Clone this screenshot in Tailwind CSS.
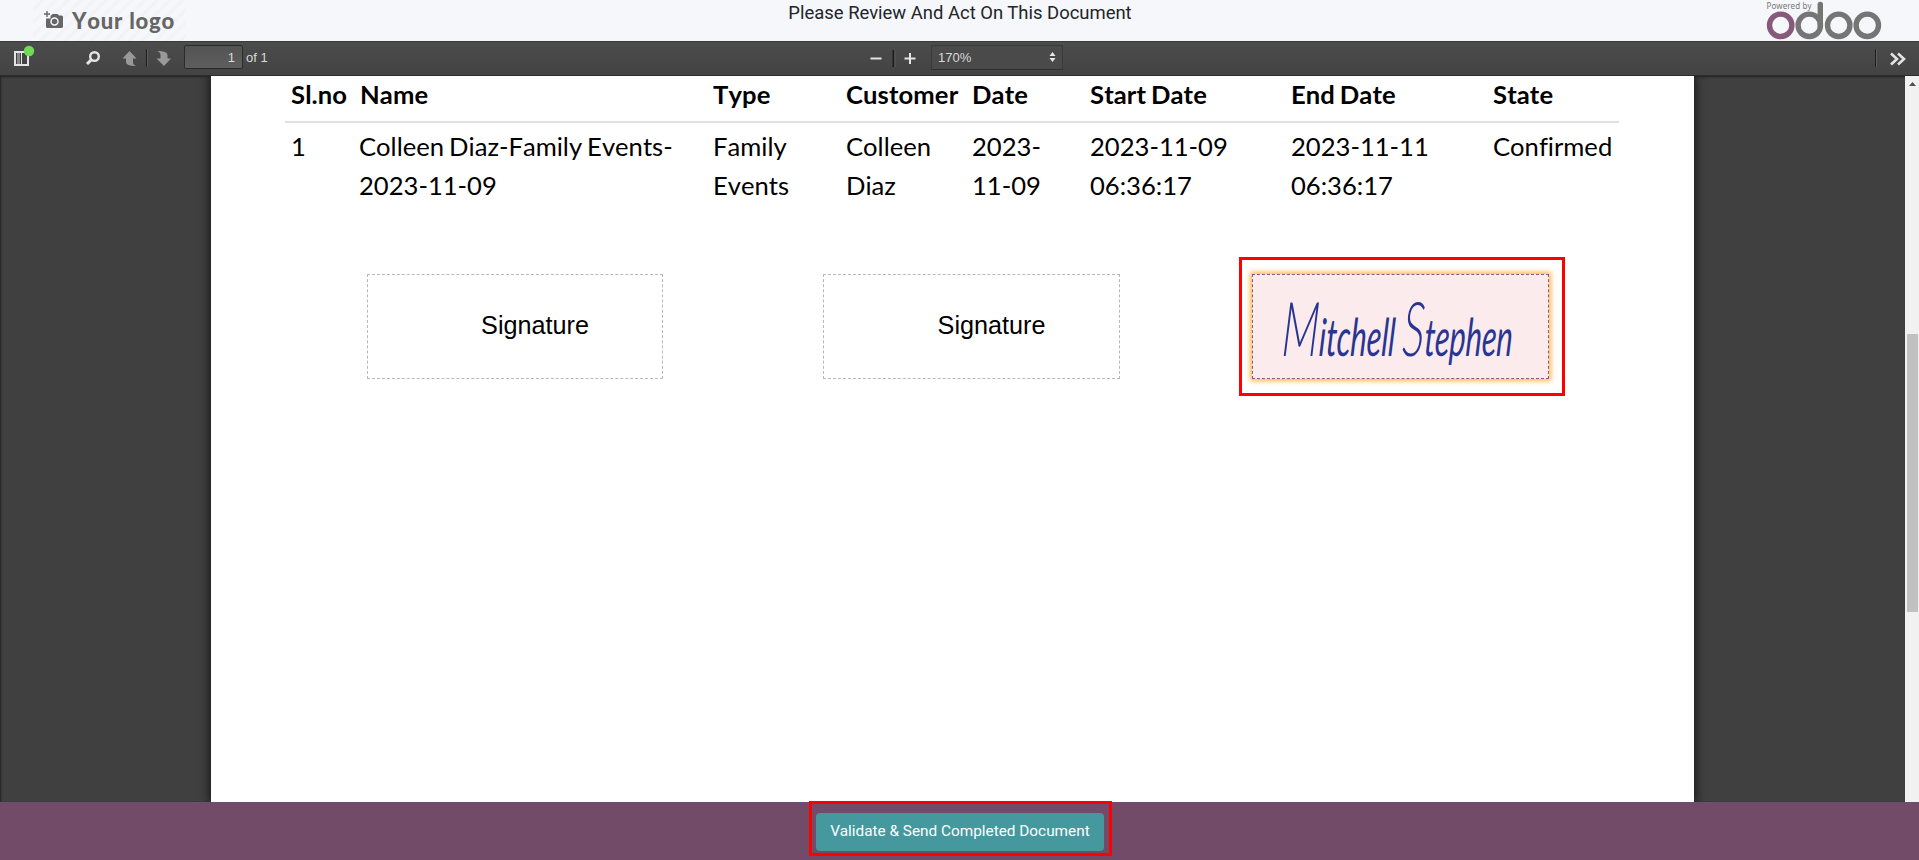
<!DOCTYPE html>
<html lang="en">
<head>
<meta charset="utf-8">
<title>Sign document</title>
<script src="https://cdn.jsdelivr.net/npm/@tailwindcss/browser@4"></script>
</head>
<body class="h-[860px] w-[1919px] overflow-hidden flex flex-col bg-[#404040] font-['Roboto',sans-serif]">

<header class="h-[41px] shrink-0 bg-[#f6f7fb] grid grid-cols-[1fr_auto_1fr] items-start">
  <div class="ml-[33px] w-[153px] h-[41px] flex items-center pl-[11px] bg-[repeating-linear-gradient(135deg,#f6f7fb_0px,#f6f7fb_5px,#f2f3f7_6px,#f2f3f7_8px,#f6f7fb_9px)]">
    <svg class="w-[20px] h-[20px] shrink-0" viewBox="0 0 20 20" fill="none">
      <path d="M3 0v6M0 3h6" stroke="#666" stroke-width="1.4"/>
      <path fill="#666" d="M7 4.500 8.500 3h5L15 4.500h2.500a1.500 1.500 0 0 1 1.500 1.500v9.500a1.500 1.500 0 0 1-1.500 1.500h-14A1.500 1.500 0 0 1 2 15.500V7.500h4.500V4.500z"/>
      <circle cx="10.500" cy="10.500" r="3.500" stroke="#f6f7fb" stroke-width="1.500"/>
    </svg>
    <span class="ml-[8px] whitespace-nowrap font-['Lato',sans-serif] font-black text-[22.500px] leading-[38px] tracking-[0.800px] [font-kerning:none] text-[#666] -mr-4 origin-left scale-x-[0.98]">Your logo</span>
  </div>
  <h1 class="text-[18.450px] leading-[26px] text-[#212529] whitespace-nowrap pl-px">Please Review And Act On This Document</h1>
  <svg class="justify-self-end mr-[36px] w-[120px] h-[41px]" viewBox="1763 0 120 41" fill="none" stroke="#757575" stroke-width="5.400">
    <text x="1766.500" y="8.500" font-family="Noto Sans" font-size="8" textLength="45" fill="#777" stroke="none">Powered by</text>
    <circle cx="1780.700" cy="25.300" r="11.200" stroke="#875a7b"/>
    <circle cx="1809.300" cy="25.300" r="11.200"/>
    <path d="M1820.300 25.300V4.500" stroke-linecap="round"/>
    <circle cx="1838.700" cy="25.300" r="11.200"/>
    <circle cx="1867.300" cy="25.300" r="11.200"/>
  </svg>
</header>

<nav class="h-[35px] shrink-0 border-b border-[#2c2c2c] bg-linear-to-b from-[#4c4c4c] to-[#434343] shadow-[inset_0_1px_0_#3a3a3a] flex items-center font-['Liberation_Sans',sans-serif] text-[#d9d9d9]">
  <div class="flex items-center h-full w-[869px]">
    <svg class="w-[184px] h-[34px] shrink-0" viewBox="0 41 184 34" fill="none">
      <path fill="#e4e4e4" d="M14 51h15v15H14z"/>
      <path fill="#888" d="M16 53h4v11h-4z"/>
      <path fill="#444" d="M16 53h1v11h-1zM20 53h1v11h-1zM22 53h5v11h-5z"/>
      <circle cx="29" cy="51" r="5.200" fill="#70db55"/>
      <circle cx="94.500" cy="56.500" r="4.300" stroke="#e4e4e4" stroke-width="2.400"/>
      <path d="m91.500 59.700-4.500 4.300" stroke="#e4e4e4" stroke-width="3"/>
      <path fill="#999" d="M129.500 51l7 7.500h-3.500v4q0 2 3 3.500-10 0-10-4v-3.500h-3.500z"/>
      <path d="M146.500 49v18" stroke="#1f1f1f"/>
      <path d="M147.500 49v18" stroke="#5c5c5c"/>
      <path fill="#999" d="M164 66l-7.500-7.500h4v-4q0-2-3-3.500 10 0 10 4v3.500h3.500z"/>
    </svg>
    <div class="w-[59px] h-[24px] mb-[2px] rounded-[2px] border border-[#2b2b2b] bg-linear-to-b from-[#535353] to-[#5e5e5e] text-right pr-[7px] text-[13px] leading-[24px]">1</div>
    <span class="ml-[3px] text-[13px] leading-[24px]">of 1</span>
  </div>
  <div class="flex items-center h-full">
    <svg class="w-[62px] h-[34px] shrink-0" viewBox="869 41 62 34" fill="none">
      <path d="M870.500 58.500h11M904.500 58.500h11M910 53v11" stroke="#e4e4e4" stroke-width="2"/>
      <path d="M893.500 50v17" stroke="#1f1f1f" stroke-width="2"/>
      <path d="M895 50v17" stroke="#5c5c5c"/>
    </svg>
    <div class="w-[132px] h-[25px] mb-[2px] border border-[#3a3a3a] border-b-[#303030] flex items-center justify-between pl-[6px] pr-[6px] bg-[#4a4a4a]">
      <span class="text-[13px] leading-[24px] pt-px">170%</span>
      <svg class="w-[7px] h-[10px]" viewBox="0 0 7 10" fill="#e8e8e8"><path d="M.5 4h6l-3-4zM.5 6h6l-3 4z"/></svg>
    </div>
  </div>
  <svg class="ml-auto w-[50px] h-[34px]" viewBox="1869 41 50 34" fill="none">
    <path d="M1875.500 49v18" stroke="#1f1f1f"/>
    <path d="M1876.500 49v18" stroke="#5c5c5c"/>
    <path d="m1891 53.500 6 5.500-6 5.500m7-11 6 5.500-6 5.500" stroke="#e4e4e4" stroke-width="2.600"/>
  </svg>
</nav>

<main class="h-[726px] shrink-0 flex overflow-hidden">
  <div class="flex-1 overflow-hidden pl-[211px] bg-[#404040] shadow-[inset_1px_1px_2px_#222]">
    <section class="w-[1483px] h-full bg-white shadow-[0_0_9px_2px_#191919] pl-[74px] text-black">
      <table class="w-[1334px] table-fixed border-collapse text-left align-top font-['Lato',sans-serif] text-[25.600px] leading-[39px] [font-kerning:none] [font-variant-ligatures:none] [word-spacing:-1.500px]">
        <colgroup><col class="w-[69px]"><col class="w-[354px]"><col class="w-[132px]"><col class="w-[127px]"><col class="w-[118px]"><col class="w-[201px]"><col class="w-[202px]"><col class="w-[131px]"></colgroup>
        <thead>
          <tr class="border-b-2 border-[#dee2e6] whitespace-nowrap leading-[36px] tracking-[0.100px]">
            <th class="pl-[6px] pb-[9px]">Sl.no</th><th class="pl-[6px] pb-[9px]">Name</th><th class="pl-[5px] pb-[9px]">Type</th><th class="pl-[6px] pb-[9px]">Customer</th><th class="pl-[5px] pb-[9px]">Date</th><th class="pl-[5px] pb-[9px]">Start Date</th><th class="pl-[5px] pb-[9px]">End Date</th><th class="pl-[5px] pb-[9px]">State</th>
          </tr>
        </thead>
        <tbody>
          <tr class="align-top whitespace-nowrap">
            <td class="pl-[6px] pt-[4px]">1</td>
            <td class="pl-[5px] pt-[4px]">Colleen Diaz-Family Events-<br>2023-11-09</td>
            <td class="pl-[5px] pt-[4px]">Family<br>Events</td>
            <td class="pl-[6px] pt-[4px]">Colleen<br>Diaz</td>
            <td class="pl-[5px] pt-[4px]">2023-<br>11-09</td>
            <td class="pl-[5px] pt-[4px]">2023-11-09<br>06:36:17</td>
            <td class="pl-[5px] pt-[4px]">2023-11-11<br>06:36:17</td>
            <td class="pl-[5px] pt-[4px]">Confirmed</td>
          </tr>
        </tbody>
      </table>
      <div class="mt-[52px] pl-[82px] flex items-start font-['Liberation_Sans',sans-serif] text-[25.200px]">
        <div class="mt-[17px] w-[296px] h-[105px] border border-dashed border-[#b8b8b8] flex items-center justify-center pl-[40px] pb-[2px]">Signature</div>
        <div class="mt-[17px] ml-[160px] w-[297px] h-[105px] border border-dashed border-[#b8b8b8] flex items-center justify-center pl-[40px] pb-[2px]">Signature</div>
        <div class="ml-[119px] w-[326px] h-[139px] border-3 border-[#ff0000] pt-[14px] pl-[10px]">
          <div class="w-[297px] h-[105px] border border-dashed border-[#875a7b] bg-[#fcebed] shadow-[0_0_5px_2px_#ffb84d] flex items-center pl-[28px]">
            <svg class="w-[240px] h-[90px] overflow-visible" viewBox="0 0 240 90">
              <text transform="translate(0 74) skewX(-3) scale(1 1.800)" font-family="Lato" font-style="italic" font-size="29" textLength="231" lengthAdjust="spacingAndGlyphs" fill="#283593"><tspan font-size="42" font-weight="300">M</tspan>itchell <tspan font-size="42" font-weight="300">S</tspan>tephen</text>
            </svg>
          </div>
        </div>
      </div>
    </section>
  </div>
  <div class="w-[14px] bg-[#f1f1f1] flex flex-col items-center">
    <svg class="w-[7px] h-[4px] mt-[6px] shrink-0" viewBox="0 0 7 4" fill="#505050"><path d="M0 4h7L3.500 0z"/></svg>
    <div class="mt-[248px] w-[11px] h-[278px] bg-[#c1c1c1]"></div>
  </div>
</main>

<footer class="h-[58px] shrink-0 bg-[#714b67] flex justify-center items-start pl-[2px]">
  <div class="-mt-px w-[303px] h-[55px] border-3 border-[#ff0000] pt-[9px] pl-[4px] relative">
    <button class="block w-[288px] h-[38px] rounded-[4px] bg-[#45989d] text-white text-[15.350px] leading-[36px] pb-[2px] whitespace-nowrap">Validate &amp; Send Completed Document</button>
  </div>
</footer>
</body>
</html>
